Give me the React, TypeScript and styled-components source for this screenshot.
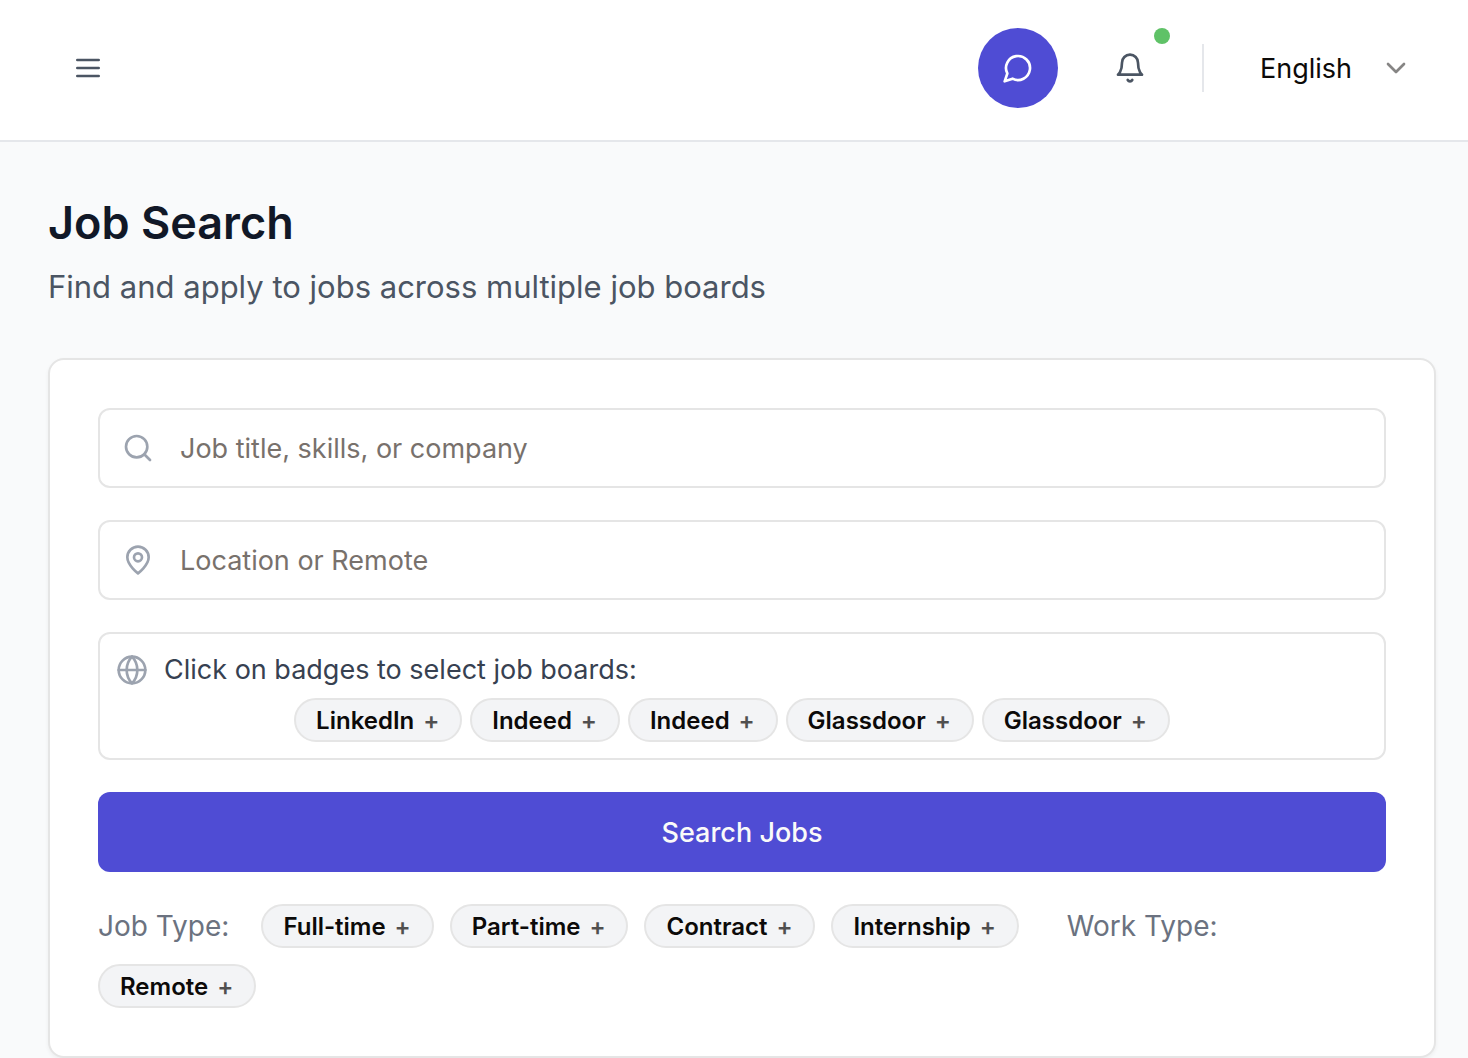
import React, { useState } from "react";
import styled, { createGlobalStyle } from "styled-components";

const GlobalStyle = createGlobalStyle`
  *, *::before, *::after { box-sizing: border-box; }
  body {
    margin: 0;
    background: #f9fafb;
    color: #0c0a09;
    font-family: Inter, "Liberation Sans", sans-serif;
    font-size: 27px;
    line-height: 40px;
    -webkit-font-smoothing: antialiased;
  }
  button, input, select { font: inherit; color: inherit; }
  h1, p { margin: 0; }
`;

const TopBar = styled.header`
  display: flex;
  align-items: center;
  justify-content: space-between;
  padding: 28px 48px 32px;
  background: #ffffff;
  border-bottom: 2px solid #e5e7eb;
`;

const Actions = styled.div`
  display: flex;
  align-items: center;
  gap: 32px;
`;

const IconButton = styled.button<{ $filled?: boolean }>`
  position: relative;
  display: grid;
  place-items: center;
  width: 80px;
  height: 80px;
  padding: 0;
  border: 0;
  border-radius: 50%;
  cursor: pointer;
  background: ${(p) => (p.$filled ? "#4f4cd4" : "transparent")};
  color: ${(p) => (p.$filled ? "#ffffff" : "#4b5563")};
`;

const StatusDot = styled.span`
  position: absolute;
  top: 0;
  right: 0;
  width: 16px;
  height: 16px;
  border-radius: 50%;
  background: #5fc267;
`;

const Divider = styled.span`
  width: 2px;
  height: 48px;
  background: #e5e7eb;
`;

const Language = styled.label`
  display: flex;
  align-items: center;
  padding: 0 8px 0 24px;
  color: #868584;
`;

const LanguageSelect = styled.select`
  appearance: none;
  width: 152px;
  height: 72px;
  margin-right: -32px;
  padding: 2px 32px 0 0;
  border: 0;
  background: transparent;
  color: #0c0a09;
  cursor: pointer;
`;

const Main = styled.main`
  padding: 48px 32px 0 48px;
`;

const Title = styled.h1`
  font-size: 45px;
  line-height: 66px;
  font-weight: 600;
  color: #111827;
`;

const Subtitle = styled.p`
  margin-top: 8px;
  font-size: 31px;
  line-height: 46px;
  color: #4b5563;
`;

const Card = styled.form`
  display: flex;
  flex-direction: column;
  gap: 32px;
  margin-top: 48px;
  padding: 48px;
  background: #ffffff;
  border: 2px solid #e5e5e5;
  border-radius: 16px;
  box-shadow: 0 2px 4px rgba(0, 0, 0, 0.05);
`;

const Field = styled.label`
  display: flex;
  align-items: center;
  gap: 26px;
  height: 80px;
  padding: 0 22px;
  border: 2px solid #e5e5e5;
  border-radius: 12px;
  color: #9ca3af;
`;

const FieldInput = styled.input`
  flex: 1;
  min-width: 0;
  padding: 2px 0 0;
  border: 0;
  outline: 0;
  background: transparent;
  color: #0c0a09;
  &::placeholder { color: #78716c; opacity: 1; }
`;

const Boards = styled.section`
  padding: 16px;
  border: 2px solid #e5e5e5;
  border-radius: 12px;
`;

const BoardsHint = styled.p`
  display: flex;
  align-items: center;
  gap: 16px;
  color: #9ca3af;
`;

const HintText = styled.span`
  color: #374151;
`;

const BoardList = styled.div`
  display: flex;
  flex-wrap: wrap;
  justify-content: center;
  gap: 8px;
  margin-top: 8px;
  padding-right: 20px;
`;

const Badge = styled.button`
  display: inline-flex;
  align-items: center;
  gap: 8px;
  height: 44px;
  padding: 2px 20px 0;
  border: 2px solid #e5e5e5;
  border-radius: 22px;
  background: #f3f4f6;
  font-size: 24px;
  line-height: 32px;
  font-weight: 600;
  cursor: pointer;
`;

const Mark = styled.span`
  width: 18px;
  text-align: center;
  opacity: 0.7;
`;

const SubmitButton = styled.button`
  height: 80px;
  padding: 2px 0 0;
  border: 0;
  border-radius: 12px;
  background: #4f4cd4;
  color: #fafaf9;
  font-weight: 500;
  cursor: pointer;
`;

const Filters = styled.div`
  display: flex;
  flex-wrap: wrap;
  align-items: center;
  gap: 16px;
`;

const FilterLabel = styled.span<{ $spaced?: boolean }>`
  margin-left: ${(p) => (p.$spaced ? "32px" : "0")};
  margin-right: 16px;
  font-size: 28px;
  color: #6b7280;
`;

type IconProps = { size?: number; stroke?: number; children: React.ReactNode };

function Icon({ size = 32, stroke = 2, children }: IconProps) {
  return (
    <svg width={size} height={size} viewBox="0 0 24 24" fill="none" stroke="currentColor"
      strokeWidth={stroke} strokeLinecap="round" strokeLinejoin="round" aria-hidden="true">
      {children}
    </svg>
  );
}

function ToggleBadge({ label }: { label: string }) {
  const [on, setOn] = useState(false);
  return (
    <Badge type="button" aria-pressed={on} onClick={() => setOn(!on)}>
      {label}
      <Mark>{on ? "×" : "+"}</Mark>
    </Badge>
  );
}

const boards = ["LinkedIn", "Indeed", "Indeed", "Glassdoor", "Glassdoor"];
const jobTypes = ["Full-time", "Part-time", "Contract", "Internship"];

export default function App() {
  return (
    <>
      <GlobalStyle />
      <TopBar>
        <IconButton type="button" aria-label="Open menu">
          <Icon><path d="M4 6h16M4 12h16M4 18h16" /></Icon>
        </IconButton>
        <Actions>
          <IconButton type="button" $filled aria-label="Messages">
            <Icon><path d="M7.9 20A9 9 0 1 0 4 16.1L2 22Z" /></Icon>
          </IconButton>
          <IconButton type="button" aria-label="Notifications">
            <Icon>
              <path d="M6 8a6 6 0 0 1 12 0c0 7 3 9 3 9H3s3-2 3-9" />
              <path d="M10.3 21a1.94 1.94 0 0 0 3.4 0" />
            </Icon>
            <StatusDot />
          </IconButton>
          <Divider />
          <Language>
            <LanguageSelect aria-label="Language" defaultValue="English">
              <option>English</option>
            </LanguageSelect>
            <Icon><path d="m6 9 6 6 6-6" /></Icon>
          </Language>
        </Actions>
      </TopBar>
      <Main>
        <Title>Job Search</Title>
        <Subtitle>Find and apply to jobs across multiple job boards</Subtitle>
        <Card onSubmit={(e) => e.preventDefault()}>
          <Field>
            <Icon><circle cx="11" cy="11" r="8" /><path d="m21 21-4.3-4.3" /></Icon>
            <FieldInput type="text" aria-label="Job title, skills, or company" placeholder="Job title, skills, or company" />
          </Field>
          <Field>
            <Icon>
              <path d="M20 10c0 6-8 12-8 12s-8-6-8-12a8 8 0 0 1 16 0Z" />
              <circle cx="12" cy="10" r="3" />
            </Icon>
            <FieldInput type="text" aria-label="Location or Remote" placeholder="Location or Remote" />
          </Field>
          <Boards>
            <BoardsHint>
              <Icon>
                <circle cx="12" cy="12" r="10" />
                <path d="M12 2a14.5 14.5 0 0 0 0 20 14.5 14.5 0 0 0 0-20" />
                <path d="M2 12h20" />
              </Icon>
              <HintText>Click on badges to select job boards:</HintText>
            </BoardsHint>
            <BoardList>
              {boards.map((name, i) => <ToggleBadge key={i} label={name} />)}
            </BoardList>
          </Boards>
          <SubmitButton type="submit">Search Jobs</SubmitButton>
          <Filters>
            <FilterLabel>Job Type:</FilterLabel>
            {jobTypes.map((name) => <ToggleBadge key={name} label={name} />)}
            <FilterLabel $spaced>Work Type:</FilterLabel>
            <ToggleBadge label="Remote" />
          </Filters>
        </Card>
      </Main>
    </>
  );
}
